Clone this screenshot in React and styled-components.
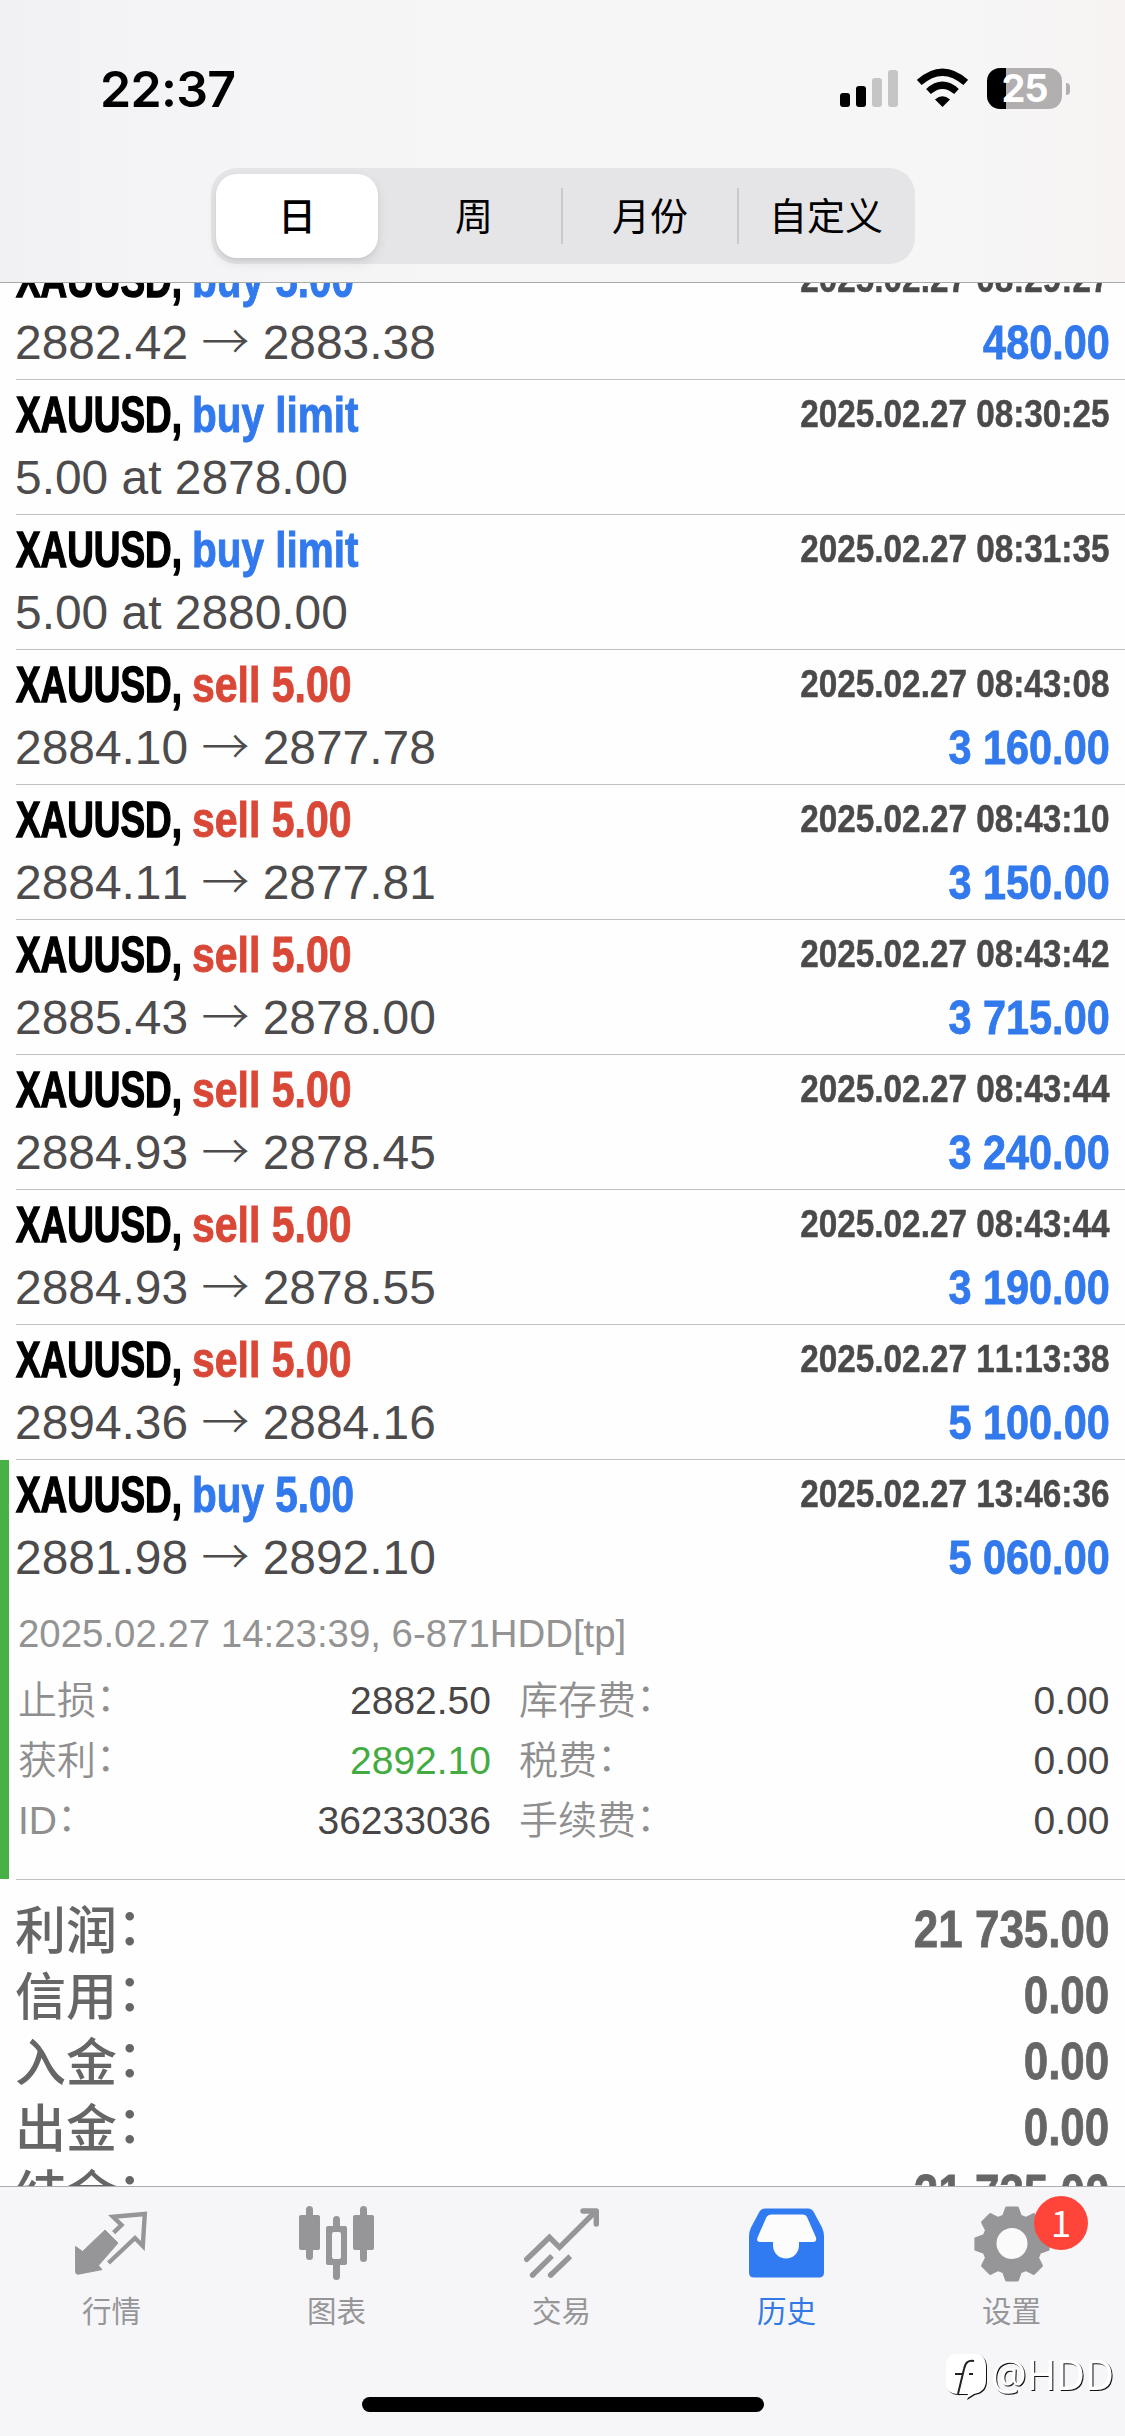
import React from "react";
import styled, { createGlobalStyle } from "styled-components";

const sans = `"Liberation Sans", Arial, "Noto Sans CJK SC", sans-serif`;
const cjk = `"Noto Sans CJK SC", "Liberation Sans", sans-serif`;
const ios = `Inter, "Liberation Sans", sans-serif`;

const Global = createGlobalStyle`
  *, *::before, *::after { box-sizing: border-box; }
  body { margin: 0; background: #fefefe; }
`;

const Screen = styled.div`
  position: relative;
  display: flex;
  flex-direction: column;
  width: 1125px;
  height: 2436px;
  overflow: hidden;
  background: #fefefe;
  font-family: ${sans};
  font-kerning: none;
`;

const Header = styled.header`
  flex: none;
  height: 283px;
  border-bottom: 1px solid #a9a9ab;
  background: linear-gradient(90deg, #f1f0f2 0%, #f4f4f7 14%, #f6f6f6 45%, #f6f6f6 85%, #f7f3f3 100%);
`;

const StatusBar = styled.div`
  display: flex;
  align-items: center;
  justify-content: space-between;
  height: 168px;
  padding: 9px 55px 0 100px;
`;

const Clock = styled.div`
  font: 600 50px/60px ${ios};
  letter-spacing: -0.7px;
  color: #000;
`;

const Indicators = styled.div`
  display: flex;
  align-items: center;
  height: 42px;
`;

const Signal = styled.svg`
  width: 58px;
  height: 42px;
  margin-right: 19px;
`;

const Wifi = styled.svg`
  width: 51px;
  height: 42px;
  margin-right: 19px;
`;

const Battery = styled.div`
  display: flex;
  align-items: center;
  justify-content: center;
  width: 75px;
  height: 41px;
  border-radius: 13px;
  background: linear-gradient(90deg, #000 0 26%, #b1afaf 26%);
  font: 700 38px/41px ${ios};
  letter-spacing: -1px;
  color: #fff;
`;

const BatteryCap = styled.div`
  width: 4px;
  height: 12px;
  margin-left: 4px;
  border-radius: 0 5px 5px 0;
  background: #b1afaf;
`;

const Segments = styled.nav`
  display: flex;
  align-items: center;
  width: 704px;
  height: 96px;
  margin-left: 211px;
  border-radius: 26px;
  background: #e5e5e7;
`;

const Segment = styled.button`
  display: flex;
  flex: 1;
  align-items: center;
  justify-content: center;
  height: 56px;
  padding: 0 0 4px;
  border: 0;
  border-right: 2px solid ${(p) => (p.$divider ? "#c9c9cd" : "transparent")};
  background: none;
  font: 400 38px/52px ${cjk};
  color: #000;
`;

const ActiveSegment = styled(Segment)`
  flex: none;
  width: 162px;
  height: 84px;
  margin: 0 9px 0 5px;
  border: 0;
  border-radius: 21px;
  background: #fff;
  box-shadow: 0 5px 12px rgba(0, 0, 0, 0.09), 0 2px 3px rgba(0, 0, 0, 0.05);
  font-weight: 500;
`;

const Content = styled.main`
  flex: 1;
  min-height: 0;
  overflow: hidden;
`;

/* The list is scrolled so that its first row starts behind the header. */
const Scroller = styled.div`
  margin-top: -38px;
`;

const Entry = styled.article`
  position: relative;
  height: ${(p) => (p.$open ? 420 : 135)}px;
  padding: 3px 15.5px 0 15px;

  &::after {
    content: "";
    position: absolute;
    left: 16px;
    right: 0;
    bottom: 0;
    height: 1px;
    background: #bfc1c2;
  }

  &::before {
    content: "";
    display: ${(p) => (p.$open ? "block" : "none")};
    position: absolute;
    left: 0;
    top: 0;
    bottom: 1px;
    width: 9px;
    background: #47b145;
  }
`;

const Line = styled.div`
  display: flex;
  align-items: center;
  justify-content: space-between;
  height: ${(p) => p.$h}px;
  line-height: ${(p) => p.$h}px;
  white-space: pre;
`;

const Title = styled.div`
  display: flex;
  padding-left: 1px;
  font-size: 49.5px;
  font-weight: 700;
`;

const Symbol = styled.span`
  width: 176px;
  color: #000;
  transform: scaleX(0.745);
  transform-origin: left;
  -webkit-text-stroke: 1.4px currentColor;
`;

const Side = styled.span`
  color: ${(p) => (p.$sell ? "#d94837" : "#3179ec")};
  transform: scaleX(${(p) => (p.$sell ? 0.828 : 0.818)});
  transform-origin: left;
  -webkit-text-stroke: 0.9px currentColor;
`;

const Time = styled.span`
  padding-bottom: 2px;
  font-size: 38.5px;
  font-weight: 700;
  line-height: 60px;
  color: #4b494a;
  transform: scaleX(0.865);
  transform-origin: right;
  -webkit-text-stroke: 0.5px currentColor;
`;

const Prices = styled.span`
  font-size: 47.9px;
  color: #4d4b4c;
`;

const Arrow = styled.span`
  font-family: ${cjk};
  font-weight: 300;
  line-height: 1;
`;

const Profit = styled.span`
  padding-bottom: 2px;
  font-size: 49px;
  font-weight: 700;
  line-height: 60px;
  color: #3179ec;
  transform: scaleX(0.846);
  transform-origin: right;
  -webkit-text-stroke: 0.8px currentColor;
`;

const Comment = styled.div`
  height: 48px;
  margin: 21px 0 0 3px;
  font-size: 38.4px;
  line-height: 47px;
  color: #939393;
`;

const Details = styled.dl`
  display: grid;
  grid-template-columns: 160px 316px 1fr 200px;
  grid-auto-rows: 60px;
  margin: 13px 0 0;
  font-size: 39px;
  line-height: 60px;
`;

const Term = styled.dt`
  height: 60px;
  padding-left: ${(p) => (p.$second ? 28 : 3)}px;
  color: #8f8f8f;
  font-family: ${(p) => (p.$latin ? sans : cjk)};
  font-weight: 350;
  line-height: ${(p) => (p.$latin ? 60 : 52)}px;
  white-space: nowrap;
`;

const Value = styled.dd`
  margin: 0;
  color: ${(p) => (p.$hit ? "#43ab41" : "#484647")};
  text-align: right;
`;

const Colon = styled.span`
  font-family: ${cjk};
  line-height: 1;
  vertical-align: 0.08em;
`;

const Summary = styled.section`
  padding: 16px 15.5px 0 15px;
`;

const SummaryLabel = styled.span`
  padding-bottom: 5px;
  font: 500 51px/60px ${cjk};
  color: #666;
`;

const SummaryValue = styled.span`
  font-size: 52px;
  font-weight: 700;
  line-height: 66px;
  color: #666;
  transform: scaleX(0.845);
  transform-origin: right;
  -webkit-text-stroke: 0.8px currentColor;
`;

const TabBar = styled.footer`
  flex: none;
  display: flex;
  flex-direction: column;
  align-items: center;
  height: 250px;
  border-top: 1px solid #adadaf;
  background: #f6f6f8;
`;

const Tabs = styled.nav`
  display: grid;
  grid-template-columns: repeat(5, 1fr);
  width: 100%;
  height: 210px;
`;

const Tab = styled.button`
  position: relative;
  display: flex;
  flex-direction: column;
  align-items: center;
  padding: 13px 2px 0 0;
  border: 0;
  background: none;
  font: 400 29.5px/40px ${cjk};
  color: ${(p) => (p.$active ? "#3179e6" : "#969698")};
`;

const Glyph = styled.svg`
  width: 90px;
  height: 84px;
  margin-bottom: 5px;
`;

const Badge = styled.span`
  position: absolute;
  left: 134px;
  top: 9px;
  width: 54px;
  height: 54px;
  border-radius: 50%;
  background: #ff4539;
  font: 400 37px/50px ${cjk};
  color: #fff;
  text-align: center;
`;

const HomeIndicator = styled.div`
  width: 402px;
  height: 15px;
  border-radius: 8px;
  background: #000;
`;

const Watermark = styled.div`
  position: absolute;
  left: 946px;
  top: 2348px;
  display: flex;
  align-items: center;
  height: 54px;
  font: 400 42px/52px "Noto Sans", sans-serif;
  color: #fff;
  filter: drop-shadow(1.5px 1.5px 0.2px #111);
`;

const WatermarkIcon = styled.svg`
  width: 42px;
  height: 48px;
  margin-right: 3px;
`;

const WatermarkText = styled.span`
  padding-bottom: 2px;
  font-weight: 400;
  transform: scaleX(0.945);
  transform-origin: left;
`;

const entries = [
  { side: "buy 5.00", time: "2025.02.27 08:29:27", from: "2882.42", to: "2883.38", profit: "480.00" },
  { side: "buy limit", time: "2025.02.27 08:30:25", order: "5.00 at 2878.00" },
  { side: "buy limit", time: "2025.02.27 08:31:35", order: "5.00 at 2880.00" },
  { side: "sell 5.00", time: "2025.02.27 08:43:08", from: "2884.10", to: "2877.78", profit: "3 160.00" },
  { side: "sell 5.00", time: "2025.02.27 08:43:10", from: "2884.11", to: "2877.81", profit: "3 150.00" },
  { side: "sell 5.00", time: "2025.02.27 08:43:42", from: "2885.43", to: "2878.00", profit: "3 715.00" },
  { side: "sell 5.00", time: "2025.02.27 08:43:44", from: "2884.93", to: "2878.45", profit: "3 240.00" },
  { side: "sell 5.00", time: "2025.02.27 08:43:44", from: "2884.93", to: "2878.55", profit: "3 190.00" },
  { side: "sell 5.00", time: "2025.02.27 11:13:38", from: "2894.36", to: "2884.16", profit: "5 100.00" },
  { side: "buy 5.00", time: "2025.02.27 13:46:36", from: "2881.98", to: "2892.10", profit: "5 060.00", open: true },
];

const details = [
  ["止损", "2882.50", "库存费", "0.00"],
  ["获利", "2892.10", "税费", "0.00"],
  ["ID", "36233036", "手续费", "0.00"],
];

const totals = [
  ["利润", "21 735.00"],
  ["信用", "0.00"],
  ["入金", "0.00"],
  ["出金", "0.00"],
  ["结余", "21 735.00"],
];

function EntryRow({ item }) {
  return (
    <Entry $open={item.open}>
      <Line $h={64}>
        <Title>
          <Symbol>XAUUSD,</Symbol>
          <Side $sell={item.side.startsWith("sell")}>{item.side}</Side>
        </Title>
        <Time>{item.time}</Time>
      </Line>
      <Line $h={62}>
        <Prices>
          {item.order || (
            <>
              {item.from} <Arrow>→</Arrow> {item.to}
            </>
          )}
        </Prices>
        {item.profit && <Profit>{item.profit}</Profit>}
      </Line>
      {item.open && (
        <>
          <Comment>2025.02.27 14:23:39, 6-871HDD[tp]</Comment>
          <Details>
            {details.map(([a, av, b, bv]) => (
              <React.Fragment key={a}>
                <Term $latin={a === "ID"}>{a}<Colon>：</Colon></Term>
                <Value $hit={a === "获利"}>{av}</Value>
                <Term $second>{b}<Colon>：</Colon></Term>
                <Value>{bv}</Value>
              </React.Fragment>
            ))}
          </Details>
        </>
      )}
    </Entry>
  );
}

/* Eight-toothed gear outline around (45, 44). */
function gearPath() {
  const pts = [];
  for (let i = 0; i < 8; i++) {
    const a = (i * Math.PI) / 4;
    [[-0.29, 29], [-0.15, 36.5], [0.15, 36.5], [0.29, 29]].forEach(([d, r]) => {
      pts.push(`${(45 + r * Math.sin(a + d)).toFixed(2)} ${(44 - r * Math.cos(a + d)).toFixed(2)}`);
    });
  }
  return `M${pts.join("L")}Z`;
}

const icons = {
  quotes: (
    <g transform="translate(-67,-2200)">
      <path fill="#969698" stroke="#969698" strokeWidth="1" strokeLinejoin="round" d="M105 2230L118 2243L98.4 2265.5L102 2269.6L78.3 2274.2Q75.6 2274.4 75.6 2271.7V2246.5L82.6 2251.5Z" />
      <path fill="none" stroke="#969698" strokeWidth="4.4" d="M113.6 2232.7L121.5 2225L113 2216.8L144.8 2214L142.8 2246L135 2238L108.5 2263" />
    </g>
  ),
  chart: (
    <g transform="translate(-292,-2200)" fill="#969698">
      <rect x="299" y="2215" width="21" height="35" rx="2" />
      <rect x="306" y="2206" width="7" height="54" rx="3.5" />
      <path fillRule="evenodd" d="M328 2226H345Q347 2226 347 2228V2263Q347 2265 345 2265H328Q326 2265 326 2263V2228Q326 2226 328 2226ZM334 2232Q332 2232 332 2234V2257Q332 2259 334 2259H339Q341 2259 341 2257V2234Q341 2232 339 2232Z" />
      <path d="M333 2226V2219.5A3.5 3.5 0 0 1 340 2219.5V2226ZM333 2264V2276.5A3.5 3.5 0 0 0 340 2276.5V2264Z" />
      <rect x="353" y="2215" width="21" height="35" rx="2" />
      <rect x="360" y="2206" width="7" height="56" rx="3.5" />
    </g>
  ),
  trade: (
    <g transform="translate(-517,-2200)" fill="none" stroke="#969698" strokeWidth="5.4">
      <path strokeLinecap="round" d="M526.7 2259.3L549.5 2237.3L559.5 2247.3L594.5 2212.5" />
      <path strokeLinecap="round" strokeLinejoin="round" d="M583 2211H596.3V2224" />
      <path d="M532 2275.7L552 2255.8M550 2275.7L570.3 2256.2" />
      <path strokeLinecap="round" d="M532.5 2275.2L533 2274.7M550.5 2275.2L551 2274.7" />
    </g>
  ),
  history: (
    <g transform="translate(-742,-2200.5)">
      <path fill="#307af2" d="M765 2209H808Q812 2209 814 2213L822 2228Q824 2232 824 2237V2273Q824 2278 819 2278H754Q749 2278 749 2273V2237Q749 2232 751 2228L759 2213Q761 2209 765 2209Z" />
      <path fill="#fcfcfd" d="M771 2215H803Q806 2215 807 2217.5L816 2238Q817 2242.5 813 2242.5H799V2246A13 13 0 0 1 773 2246V2242.5H760Q756 2242.5 757.5 2238L766.5 2217.5Q768 2215 771 2215Z" />
    </g>
  ),
  settings: (
    <>
      <path d={gearPath()} fill="#969698" stroke="#969698" strokeWidth="3" strokeLinejoin="round" />
      <circle cx="45" cy="43.5" r="15.5" fill="#fafafb" />
    </>
  ),
};

const tabs = [
  { icon: "quotes", label: "行情" },
  { icon: "chart", label: "图表" },
  { icon: "trade", label: "交易" },
  { icon: "history", label: "历史", active: true },
  { icon: "settings", label: "设置", badge: "1" },
];

export default function App() {
  return (
    <>
      <Global />
      <Screen>
        <Header>
          <StatusBar>
            <Clock>22:37</Clock>
            <Indicators>
              <Signal viewBox="0 0 58 42">
                <rect x="0" y="25" width="10" height="14" rx="3" />
                <rect x="16" y="18" width="10" height="21" rx="3" />
                <rect x="32" y="10" width="10" height="29" rx="3" fill="#c6c5c6" />
                <rect x="48" y="2" width="10" height="37" rx="3" fill="#c6c5c6" />
              </Signal>
              <Wifi viewBox="0 0 51 42">
                <path d="M25.5 39L18 31.5Q25.5 25 33 31.5Z" />
                <path d="M11.5 23.5Q25.5 11 39.5 23.5" fill="none" stroke="#000" strokeWidth="7" />
                <path d="M2.3 14.5Q25.5 -6 48.7 14.5" fill="none" stroke="#000" strokeWidth="7" />
              </Wifi>
              <Battery>25</Battery>
              <BatteryCap />
            </Indicators>
          </StatusBar>
          <Segments>
            <ActiveSegment>日</ActiveSegment>
            <Segment $divider>周</Segment>
            <Segment $divider>月份</Segment>
            <Segment>自定义</Segment>
          </Segments>
        </Header>
        <Content>
          <Scroller>
            {entries.map((item, i) => (
              <EntryRow key={i} item={item} />
            ))}
            <Summary>
              {totals.map(([label, value]) => (
                <Line key={label} $h={66}>
                  <SummaryLabel>{label}<Colon>：</Colon></SummaryLabel>
                  <SummaryValue>{value}</SummaryValue>
                </Line>
              ))}
            </Summary>
          </Scroller>
        </Content>
        <TabBar>
          <Tabs>
            {tabs.map((t) => (
              <Tab key={t.icon} $active={t.active}>
                <Glyph viewBox="0 0 90 84">{icons[t.icon]}</Glyph>
                {t.label}
                {t.badge && <Badge>{t.badge}</Badge>}
              </Tab>
            ))}
          </Tabs>
          <HomeIndicator />
        </TabBar>
        <Watermark>
          <WatermarkIcon viewBox="0 0 42 48">
            <path fill="#fff" fillRule="evenodd" d="M12 3H28Q40 3 40 16V29Q40 41 28 43L20 48L22 43H12Q0 43 0 31V15Q0 3 12 3Z" />
            <path fill="none" stroke="#222" strokeWidth="2" d="M28 10Q20 8 18 18L12 43M9 23H17M23 23H27" />
          </WatermarkIcon>
          <WatermarkText>@HDD</WatermarkText>
        </Watermark>
      </Screen>
    </>
  );
}
